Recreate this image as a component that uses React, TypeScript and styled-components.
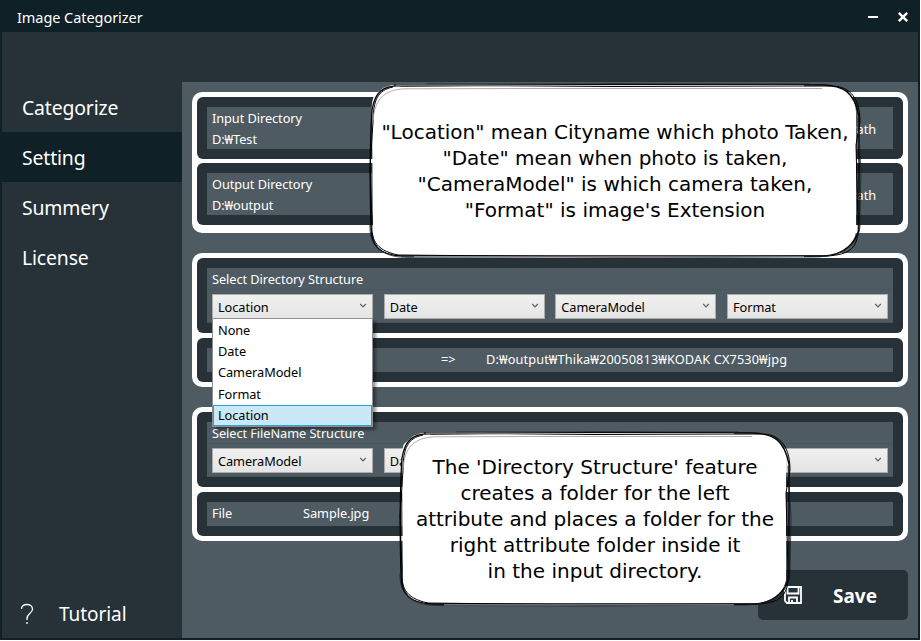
import React from 'react';
import styled, { createGlobalStyle } from 'styled-components';

const GlobalStyle = createGlobalStyle`
  body { margin: 0; background: #fff; overflow: hidden; }
  * { box-sizing: border-box; }
`;

const Window = styled.div`
  position: relative;
  display: flex;
  flex-direction: column;
  width: 920px;
  height: 640px;
  background: #263238;
  border: solid #102027;
  border-width: 0 2px 2px;
  color: #fff;
  font: 12.75px/21px 'Noto Sans', 'Noto Sans CJK KR', sans-serif;
  letter-spacing: -0.06px;
  white-space: nowrap;
`;

const TitleBar = styled.header`
  display: flex;
  justify-content: space-between;
  height: 32px;
  padding: 2px 8px 0 15px;
  background: #102027;
  font-size: 14.5px;
  line-height: 30px;
`;

const WindowButtons = styled.svg`
  width: 44px;
  height: 14px;
  margin-top: 8px;
`;

const Body = styled.div`
  display: flex;
  flex: 1;
`;

const Sidebar = styled.nav`
  display: flex;
  flex-direction: column;
  width: 180px;
  padding-top: 50px;
`;

const NavItem = styled.a<{ $active?: boolean }>`
  height: 50px;
  margin-left: -2px;
  padding-left: 22px;
  font-size: 19.4px;
  line-height: 52px;
  letter-spacing: -0.15px;
  background: ${(p) => (p.$active ? '#102027' : 'transparent')};
`;

const TutorialLink = styled.a`
  display: flex;
  align-items: center;
  gap: 25px;
  height: 50px;
  margin-top: auto;
  padding: 2px 0 0 18px;
  font-size: 19px;
`;

const Content = styled.main`
  display: flex;
  flex-direction: column;
  flex: 1;
  margin-top: 50px;
  padding: 10px 10px 0;
  background: #4f5b62;
`;

const Group = styled.section<{ $gap: number; $bottom: number }>`
  display: flex;
  flex-direction: column;
  gap: ${(p) => p.$gap}px;
  margin-bottom: 20px;
  padding: 5px 5px ${(p) => p.$bottom}px;
  background: #fff;
  border-radius: 10px;
`;

const Panel = styled.div<{ $height: number }>`
  display: flex;
  height: ${(p) => p.$height}px;
  padding: 10px;
  background: #263238;
  border-radius: 6px;
`;

const Field = styled.div`
  flex: 1;
  display: flex;
  justify-content: space-between;
  padding: 1px 5px 0;
  background: #4f5b62;
`;

const FieldAction = styled.span`
  padding: 11px 12px 0 0;
`;

const SelectField = styled.div`
  flex: 1;
  padding: 0 5px;
  background: linear-gradient(#4f5b62 21px, #4a565d 21px, #4a565d 22px, #4f5b62 22px);
  border-bottom: 1px solid #465259;
`;

const FieldTitle = styled.div`
  height: 26px;
  line-height: 23px;
`;

const SelectRow = styled.div`
  display: grid;
  grid-template-columns: repeat(4, 161px);
  justify-content: space-between;
`;

const SelectBox = styled.div`
  position: relative;
  display: flex;
  align-items: center;
  justify-content: space-between;
  height: 25px;
  padding: 1px 4px 0 5px;
  border: 1px solid #acacac;
  background: linear-gradient(#f0f0f0, #e5e5e5);
  color: #000;
`;

const Chevron = styled.svg`
  width: 10px;
  height: 8px;
  margin: 0 0 2px auto;
`;

const Popup = styled.div`
  position: absolute;
  z-index: 2;
  top: 23px;
  left: -1px;
  width: 161px;
  height: 109px;
  padding-top: 1px;
  background: #fff;
  border: 1px solid #8c9092;
  box-shadow: 3px 3px 3px rgba(0, 0, 0, 0.4);
`;

const Option = styled.div<{ $selected?: boolean }>`
  height: 21.2px;
  padding-left: 4px;
  line-height: 19.4px;
  border: 1px solid ${(p) => (p.$selected ? '#26a0da' : 'transparent')};
  background: ${(p) => (p.$selected ? '#cbe8f6' : 'transparent')};
`;

const PreviewField = styled.div<{ $columns: string }>`
  flex: 1;
  display: grid;
  grid-template-columns: ${(p) => p.$columns};
  padding-left: 5px;
  line-height: 23px;
  background: #4f5b62;
`;

const PreviewPath = styled.span`
  letter-spacing: 0.12px;
`;

const SaveButton = styled.button`
  display: flex;
  align-items: center;
  align-self: flex-end;
  gap: 30px;
  width: 150px;
  height: 50px;
  margin-top: 9px;
  padding: 2px 0 0 25px;
  border: 0;
  border-radius: 5px;
  background: #263238;
  color: #fff;
  font: 700 19px 'Noto Sans', sans-serif;
`;

const Bubble = styled.aside<{ $x: number; $y: number; $w: number; $pad: number }>`
  position: absolute;
  z-index: 3;
  left: ${(p) => p.$x - 2}px;
  top: ${(p) => p.$y}px;
  width: ${(p) => p.$w}px;
  height: 182px;
  padding-top: ${(p) => p.$pad}px;
  color: #000;
  font: 20px/26px 'DejaVu Sans', sans-serif;
  letter-spacing: 0.01px;
  text-align: center;
`;

const BubbleShape = styled.svg`
  position: absolute;
  inset: 0;
  z-index: -1;
`;

function Sketch({ w }: { w: number }) {
  const r = w - 4;
  return (
    <BubbleShape width={w} height={182} fill="none" stroke="#000">
      <path
        stroke="none"
        fill="#fff"
        d={`M6 34Q5 22 8 16L17 8L26 5H${w - 34}Q${w - 9} 8 ${w - 8} 32V152Q${w - 12} 172 ${w - 36} 176H30Q9 173 7 154Z`}
      />
      <path strokeWidth="1.3" d={`M36 6C17 5 9 12 6 30C4 60 4 110 5 148C5 166 14 175 36 176L${w - 42} 176C${w - 18} 176 ${r - 4} 160 ${r - 1} 150L${r - 1} 36C${w - 10} 12 ${w - 20} 6 ${w - 40} 5L${w / 2} 4.5Z`} />
      <path strokeWidth="1" d={`M27 7C12 10 7 20 7 42L4 88L6 142C5 158 8 170 32 175L${w / 2} 177L${w - 38} 176C${w - 14} 175 ${r} 168 ${r - 2} 142L${r - 4} 65L${r} 42C${r} 14 ${w - 18} 6 ${w - 32} 6L${w / 2} 6.5L28 5`} />
      <path stroke="#999" strokeWidth=".8" d={`M7 40C9 20 17 10 38 8.8L${w / 3} 8.5L${w - 42} 8.5`} />
      <path stroke="#182126" strokeWidth="1" strokeOpacity=".75" d={`M4 145C3 163 12 178 44 177.5L${w / 2} 178L${w - 50} 177C${w - 16} 177 ${r + 1} 160 ${r} 142L${r + 1} 90L${r - 2} 38M60 4L${w - 55} 4`} />
      <path stroke="#fff" strokeWidth=".8" strokeOpacity=".7" d={`M30 5.2L${w - 60} 5.8M48 176.8L${w - 60} 176.8`} />
    </BubbleShape>
  );
}

function Select({ value, children }: { value?: string; children?: React.ReactNode }) {
  return (
    <SelectBox>
      {value}
      <Chevron fill="none" stroke="#606060" strokeWidth="1.2">
        <path d="M2.2 2L5 4.8L7.8 2" />
      </Chevron>
      {children}
    </SelectBox>
  );
}

const directories = [
  ['Input Directory', 'D:₩Test'],
  ['Output Directory', 'D:₩output'],
];

export default function App() {
  return (
    <>
      <GlobalStyle />
      <Window>
        <TitleBar>
          Image Categorizer
          <WindowButtons stroke="#fff" fill="none">
            <path strokeWidth="2" d="M2 7H12" />
            <path strokeWidth="2.4" d="M32.8 2.8L41.2 11.2M41.2 2.8L32.8 11.2" />
          </WindowButtons>
        </TitleBar>
        <Body>
          <Sidebar>
            <NavItem>Categorize</NavItem>
            <NavItem $active>Setting</NavItem>
            <NavItem>Summery</NavItem>
            <NavItem>License</NavItem>
            <TutorialLink>
              <svg width="14" height="22" fill="none" stroke="#fff" strokeWidth="1.3">
                <path d="M1.5 6C1.5 2.8 3.8 1.5 7 1.5S12.5 3.4 12.5 6.2C12.5 10.2 7 10.5 7 15.5V17M7 19V21" />
              </svg>
              Tutorial
            </TutorialLink>
          </Sidebar>
          <Content>
            <Group $gap={4} $bottom={8}>
              {directories.map(([title, path]) => (
                <Panel key={title} $height={62}>
                  <Field>
                    <div>
                      {title}
                      <br />
                      {path}
                    </div>
                    <FieldAction>Path</FieldAction>
                  </Field>
                </Panel>
              ))}
            </Group>
            <Group $gap={5} $bottom={5}>
              <Panel $height={75}>
                <SelectField>
                  <FieldTitle>Select Directory Structure</FieldTitle>
                  <SelectRow>
                    <Select value="Location">
                      <Popup>
                        <Option>None</Option>
                        <Option>Date</Option>
                        <Option>CameraModel</Option>
                        <Option>Format</Option>
                        <Option $selected>Location</Option>
                      </Popup>
                    </Select>
                    <Select value="Date" />
                    <Select value="CameraModel" />
                    <Select value="Format" />
                  </SelectRow>
                </SelectField>
              </Panel>
              <Panel $height={44}>
                <PreviewField $columns="229px 45px 1fr">
                  <span />
                  <span>=&gt;</span>
                  <PreviewPath>D:₩output₩Thika₩20050813₩KODAK CX7530₩jpg</PreviewPath>
                </PreviewField>
              </Panel>
            </Group>
            <Group $gap={5} $bottom={5}>
              <Panel $height={75}>
                <SelectField>
                  <FieldTitle>Select FileName Structure</FieldTitle>
                  <SelectRow>
                    <Select value="CameraModel" />
                    <Select value="Date" />
                    <Select />
                    <Select />
                  </SelectRow>
                </SelectField>
              </Panel>
              <Panel $height={44}>
                <PreviewField $columns="91px 1fr">
                  <span>File</span>
                  <span>Sample.jpg</span>
                </PreviewField>
              </Panel>
            </Group>
            <SaveButton>
              <svg width="20" height="20" fill="none" stroke="#fff" strokeWidth="1.8">
                <path d="M2 1H18V17H4L2 15ZM4.5 1V7.5H15.5V1M6 17V11.5H14V17M9 14V17" />
              </svg>
              Save
            </SaveButton>
          </Content>
        </Body>
        <Bubble $x={366} $y={80} $w={498} $pad={39}>
          <Sketch w={498} />
          "Location" mean Cityname which photo Taken,
          <br />
          "Date" mean when photo is taken,
          <br />
          "CameraModel" is which camera taken,
          <br />
          "Format" is image's Extension
        </Bubble>
        <Bubble $x={396} $y={428} $w={398} $pad={26}>
          <Sketch w={398} />
          The 'Directory Structure' feature
          <br />
          creates a folder for the left
          <br />
          attribute and places a folder for the
          <br />
          right attribute folder inside it
          <br />
          in the input directory.
        </Bubble>
      </Window>
    </>
  );
}
